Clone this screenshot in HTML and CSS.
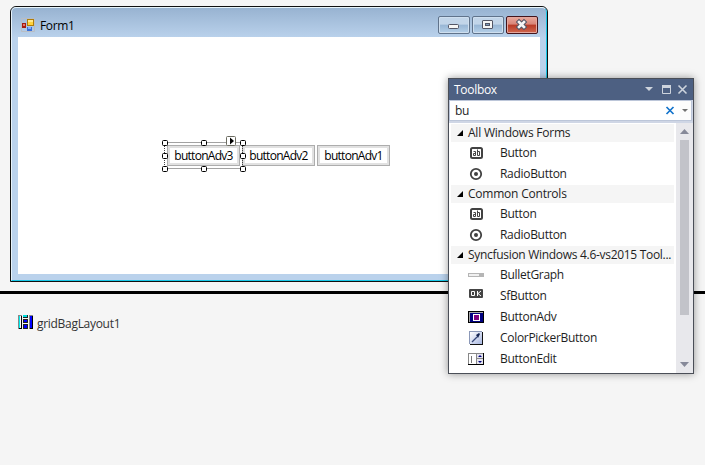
FILE: index.html
```
<!DOCTYPE html>
<html lang="en">
<head>
<meta charset="utf-8">
<title>Form1</title>
<link rel="stylesheet" href="styles.css">
</head>
<body>
<svg width="0" height="0" class="defs">
  <symbol id="ab" viewBox="0 0 16 16"><rect x="3" y="3" width="11" height="10" rx="1.500" fill="#fff" stroke="#424242" stroke-width="2"/><path d="M5.500 6.500h2v4h-2v-2h2M9.500 4.500v6h2v-4h-2" fill="none" stroke="#424242"/></symbol>
  <symbol id="radio" viewBox="0 0 16 16"><circle cx="8" cy="8" r="5.200" fill="#fff" stroke="#424242" stroke-width="1.800"/><circle cx="8" cy="8" r="2" fill="#424242"/></symbol>
</svg>
<main class="designer">
  <section class="form">
    <div class="frame">
      <header class="caption">
        <svg class="form-icon" width="14" height="14"><path d="M.5.5h13v13H.5z" fill="none" stroke="#b9bdc4"/><rect x="1" y="5" width="4" height="5" fill="#a51c10"/><path d="M2 6h2v2H2z" fill="#e4766c"/><rect x="6.500" y="1.500" width="6" height="6" fill="#ffd23c" stroke="#b07d08"/><path d="M7 2h5v2H7z" fill="#ffe88c"/><rect x="6" y="9" width="5" height="4" fill="#3b6fd8"/><path d="M7 9h3v2H7z" fill="#83b0f5"/></svg>
        <span class="form-title">Form1</span>
        <div class="controls">
          <i class="ctl"><svg width="30" height="16"><rect x="9.500" y="7.500" width="10" height="4" rx="1" fill="#f5f5f5" stroke="#535666"/></svg></i>
          <i class="ctl"><svg width="30" height="16"><rect x="9.500" y="3.500" width="10" height="8" rx=".5" fill="#f5f5f5" stroke="#535666"/><rect x="12.500" y="6.500" width="4" height="2" fill="#7f9dbd" stroke="#535666"/></svg></i>
          <i class="ctl close"><svg width="30" height="16"><path d="M12 5l5 5M17 5l-5 5" stroke="#535666" stroke-width="4.600" stroke-linecap="square"/><path d="M12 5l5 5M17 5l-5 5" stroke="#f5f5f5" stroke-width="2.600" stroke-linecap="square"/></svg></i>
        </div>
      </header>
      <div class="client">
        <div class="button-row">
          <div class="btn">buttonAdv3</div><div class="btn">buttonAdv2</div><div class="btn">buttonAdv1</div>
          <svg class="selection" width="82" height="38"><path d="M3.500 9.500h79M3.500 35.500h79M3.500 9v27M81.500 9v27" stroke="#444" stroke-dasharray="1 1" fill="none"/><g fill="#fff" stroke="#000"><rect x="1.500" y="7.500" width="5" height="5" rx="1"/><rect x="40.500" y="7.500" width="5" height="5" rx="1"/><rect x="79.500" y="7.500" width="5" height="5" rx="1"/><rect x="1.500" y="20.500" width="5" height="5" rx="1"/><rect x="79.500" y="20.500" width="5" height="5" rx="1"/><rect x="1.500" y="33.500" width="5" height="5" rx="1"/><rect x="40.500" y="33.500" width="5" height="5" rx="1"/><rect x="79.500" y="33.500" width="5" height="5" rx="1"/></g><rect x="65.500" y="3.500" width="9" height="9" rx="1" fill="#fff" stroke="#6b6b60"/><path d="M69 4.500l4 3.500-4 3.500z"/></svg>
        </div>
      </div>
    </div>
  </section>
</main>
<footer class="tray">
  <svg width="15" height="14" shape-rendering="crispEdges"><path d="M0 0h4v14H0zM11 0h4v14h-4z" fill="#888"/><path d="M1 1h3v13H1zM12 1h3v13h-3z" fill="#000"/><path d="M1 1h2v12H1z" fill="#fff"/><path d="M1 1h1v12H1z" fill="#0ee"/><path d="M12 1h2v12h-2z" fill="#00f"/><path d="M5 0h5v3H5zM5 4h5v4H5zM5 9h5v5H5z" fill="#222"/><path d="M5 0h4v2H5z" fill="#0dd"/><path d="M6 5h3v2H6zM6 10h3v3H6z" fill="#00f"/></svg>
  <span>gridBagLayout1</span>
</footer>
<aside class="toolbox">
  <header class="tb-head"><span>Toolbox</span>
    <svg width="48" height="22"><path d="M3 9h8l-4 4z" fill="#ced4dd"/><path d="M20.500 7.500h8v8h-8z" fill="none" stroke="#ced4dd"/><path d="M20 7h9v3h-9z" fill="#ced4dd"/><path d="M36.500 7.500l8 8M44.500 7.500l-8 8" stroke="#ced4dd" stroke-width="1.600"/></svg>
  </header>
  <div class="search"><span>bu</span>
    <svg width="28" height="19"><rect x="17" width="11" height="19" fill="#fcfcfc"/><path d="M3.500 6l7 7M10.500 6l-7 7" stroke="#1374cc" stroke-width="1.700"/><path d="M19 8h6l-3 3z" fill="#717171"/></svg>
  </div>
  <div class="body">
    <div class="list">
      <h2><svg width="7" height="7"><path d="M6 0v6H0z"/></svg><span>All Windows Forms</span></h2>
      <ul><li><svg width="16" height="16"><use href="#ab"/></svg><span>Button</span></li><li><svg width="16" height="16"><use href="#radio"/></svg><span>RadioButton</span></li></ul>
      <h2><svg width="7" height="7"><path d="M6 0v6H0z"/></svg><span>Common Controls</span></h2>
      <ul><li><svg width="16" height="16"><use href="#ab"/></svg><span>Button</span></li><li><svg width="16" height="16"><use href="#radio"/></svg><span>RadioButton</span></li></ul>
      <h2><svg width="7" height="7"><path d="M6 0v6H0z"/></svg><span class="long">Syncfusion Windows 4.6-vs2015 Tool...</span></h2>
      <ul>
        <li><svg width="16" height="16"><path d="M0 6h16v4H0z" fill="#b5b5b5"/><path d="M1 7h10v2H1z" fill="#f0f0f0"/></svg><span>BulletGraph</span></li>
        <li><svg width="16" height="16"><rect x="1" y="1" width="14" height="9" rx="1" fill="#444"/><path d="M3.500 3.500h3v4h-3zM9.500 3v5M13 3l-3 2.500L13 8" fill="none" stroke="#fff"/></svg><span>SfButton</span></li>
        <li><svg width="16" height="16"><path d="M0 2h16v12H0z"/><path d="M1 3h14v10H1z" fill="#aaa"/><path d="M2 4h13v9H2z" fill="#000080"/><path d="M5 5h7v7H5z" fill="#fff"/><path d="M6 6h5v5H6z" fill="#800080"/></svg><span>ButtonAdv</span></li>
        <li><svg width="16" height="16"><defs><linearGradient id="cp" x2="1" y2="1"><stop stop-color="#fff"/><stop offset="1" stop-color="#a9b8e2"/></linearGradient></defs><path d="M2 2h13v13H2z" fill="#111"/><path d="M1 1h13v13H1z" fill="#8b98b8"/><path d="M2 2h12v12H2z" fill="url(#cp)"/><path d="M4 12l5-5" stroke="#36487a" stroke-width="1.300"/><path d="M8 5l3-2 1 1-2 4z" fill="#142452"/></svg><span>ColorPickerButton</span></li>
        <li><svg width="16" height="16"><path d="M0 2h16v12H0z" fill="#888"/><path d="M15 2h1v12H0v-1h15z"/><path d="M1 3h7v10H1z" fill="#fff"/><path d="M9 3h6v4H9zM9 8h6v5H9z" fill="#e5e5ee"/><path d="M3 5h1v7H3z" fill="#777"/><path d="M10 6h4l-2-2zM10 10h4l-2 2z" fill="#000080"/></svg><span>ButtonEdit</span></li>
      </ul>
    </div>
    <div class="scroll"><svg width="17" height="17"><path d="M4 11h9L8.500 6z" fill="#868999"/></svg><i class="thumb"></i><svg width="17" height="17"><path d="M4 6h9l-4.500 5z" fill="#868999"/></svg></div>
  </div>
</aside>
</body>
</html>
```
FILE: styles.css
```
* { box-sizing: border-box; }
body { margin: 0; width: 705px; height: 465px; overflow: hidden; position: relative; background: #f5f5f5; color: #1e1e1e; font: 12px/16px "Open Sans", "Noto Sans", sans-serif; }
svg { display: block; flex: none; }
.defs { position: absolute; }
.designer { height: 294px; padding: 6px 0 0 10px; border-bottom: 3px solid #000; }
.form { width: 538px; height: 276px; border: 1px solid #101010; border-radius: 6px 6px 0 0; background: #b9d1ea; overflow: hidden; }
.frame { height: 274px; padding: 0 6px 7px 6px; border: solid; border-width: 1px; border-color: #e8f5fb #19c8e8 #19c8e8 #e7f3fb; background: linear-gradient(#98b3d1, #bad2ec 30px); border-radius: 5px 5px 0 0; }
.caption { display: flex; height: 29px; }
.form-icon { margin: 10px 5px 0 3px; }
.form-title { margin-top: 10px; color: #000; letter-spacing: -.35px; }
.controls { display: flex; gap: 2px; margin: 8px 2px 0 auto; }
.ctl { width: 32px; height: 18px; border: 1px solid #60738b; border-radius: 2px; background: linear-gradient(#c2d5e9 0 45%, #98b6d5 50%, #b5d0e9); box-shadow: inset 0 0 0 1px #cfdfef; }
.close { border-color: #43141c; background: linear-gradient(#e9a99d 0, #d98578 45%, #b83a26 50%, #cf6850); box-shadow: inset 0 0 0 1px #e4a79e; }
.client { height: 237px; background: #fff; padding: 108px 0 0 149px; }
.button-row { display: flex; gap: 2px; position: relative; width: 223px; }
.btn { width: 73px; height: 21px; border: 1px solid #adadad; box-shadow: inset 0 0 0 2px #e1e1e1; background: #fff; color: #000; font-size: 12px; line-height: 20px; text-align: center; letter-spacing: -.72px; white-space: nowrap; }
.selection { position: absolute; left: -6px; top: -12px; overflow: visible; }
.tray { display: flex; align-items: flex-start; gap: 4px; padding: 21px 0 0 18px; color: #333; letter-spacing: -.3px; }
.tray span { margin-top: 1px; }
.toolbox { position: absolute; left: 448px; top: 78px; width: 246px; height: 296px; border: 1px solid #4a4e57; background: #cfd6e5; box-shadow: 0 0 8px #0006; letter-spacing: -.3px; }
.tb-head { display: flex; justify-content: space-between; height: 21px; padding: 3px 3px 0 5px; background: #4d6082; color: #fff; }
.tb-head svg { margin-top: -4px; }
.search { display: flex; justify-content: space-between; height: 21px; margin-right: 1px; border: 1px solid #bcc6d9; background: #fff; padding: 2px 0 0 5px; }
.search svg { margin-top: -2px; }
.body { display: flex; height: 250px; margin-top: 2px; }
.list { width: 227px; background: #fff; padding-top: 1px; }
h2 { display: flex; align-items: center; height: 18px; margin: 0 2px; padding-left: 6px; gap: 4px; background: #f5f5f5; font: inherit; letter-spacing: -.22px; white-space: nowrap; }
.long { letter-spacing: -.3px; }
ul { list-style: none; margin: 0 0 1px; padding: 0; }
li { display: flex; align-items: center; height: 21px; padding-left: 19px; gap: 16px; }
.scroll { display: flex; flex-direction: column; justify-content: space-between; width: 17px; background: #e8e8ec; }
.thumb { width: 9px; height: 175px; margin: 0 4px auto; background: #c2c3c9; }
```
